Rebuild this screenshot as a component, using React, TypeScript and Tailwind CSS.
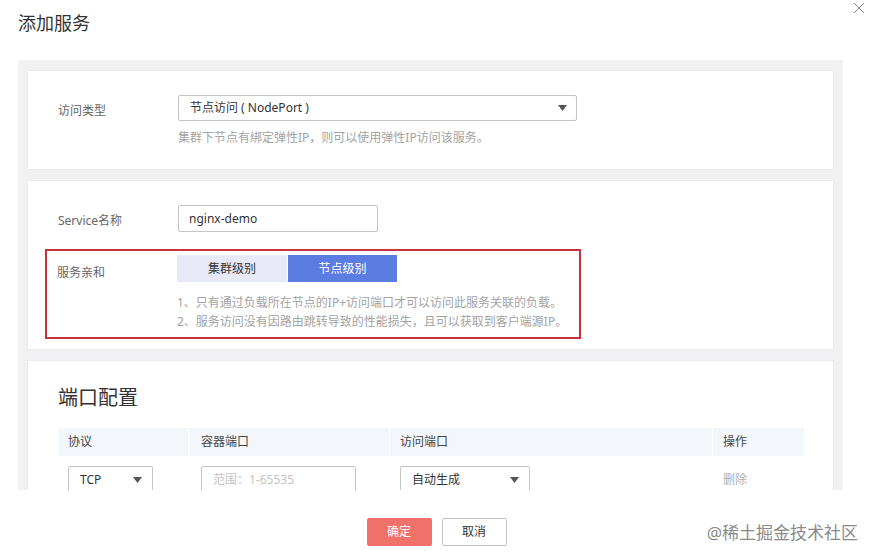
import React from "react";

const Caret = () => (
  <svg width="9" height="6" viewBox="0 0 9 6" className="shrink-0">
    <path d="M0 0 L9 0 L4.5 6 Z" fill="#555" />
  </svg>
);

export default function App() {
  const font = { fontFamily: '"Noto Sans", "Noto Sans CJK SC", sans-serif' };
  return (
    <div
      className="relative w-[873px] h-[560px] bg-white overflow-hidden text-[12px] text-[#555]"
      style={font}
    >
      <div className="h-[60px] pl-[18px] pt-[10px]">
        <h1 className="text-[18px] leading-[26px] text-[#333] font-normal">添加服务</h1>
      </div>
      <div className="absolute right-[8px] top-[0px]">
        <svg width="12" height="12" viewBox="0 0 12 12" className="mt-[2px]">
          <path d="M1 1 L11 11 M11 1 L1 11" stroke="#888" strokeWidth="1" />
        </svg>
      </div>

      <div className="ml-[18px] w-[825px] h-[430px] bg-[#f1f1f4] overflow-hidden pt-[10px] pl-[9px] pr-[9px] flex flex-col gap-[10px]">
        {/* Card 1 */}
        <div className="h-[100px] shrink-0 bg-white border border-[#ebebef] pt-[24px] pl-[30px]">
          <div className="flex">
            <div className="w-[120px] pt-[8px] leading-[16px] text-[#666]">访问类型</div>
            <div>
              <div className="w-[399px] h-[26px] border border-[#c4c4c4] rounded-[2px] flex items-center justify-between pl-[11px] pr-[9px] text-[#333]">
                <span>节点访问 ( NodePort )</span>
                <Caret />
              </div>
              <div className="mt-[9px] leading-[16px] text-[#a3a3a3]">
                集群下节点有绑定弹性IP，则可以使用弹性IP访问该服务。
              </div>
            </div>
          </div>
        </div>

        {/* Card 2 */}
        <div className="h-[170px] shrink-0 bg-white border border-[#ebebef] pt-[24px]">
          <div className="flex pl-[30px]">
            <div className="w-[120px] pt-[8px] leading-[16px] text-[#666]">Service名称</div>
            <div className="w-[200px] h-[27px] border border-[#c4c4c4] rounded-[2px] flex items-center pl-[10px] text-[#333]">
              nginx-demo
            </div>
          </div>
          <div className="ml-[17px] mt-[17px] w-[536px] h-[90px] border-2 border-[#c8323f] flex pl-[10px] pt-[4px]">
            <div className="w-[120px] pt-[10px] leading-[16px] text-[#666]">服务亲和</div>
            <div>
              <div className="flex gap-[1px]">
                <div className="w-[110px] h-[27px] bg-[#e7e9f6] flex items-center justify-center text-[#333]">
                  集群级别
                </div>
                <div className="w-[109px] h-[27px] bg-[#5b7ce0] flex items-center justify-center text-white">
                  节点级别
                </div>
              </div>
              <div className="mt-[11px] leading-[19px] text-[#a3a3a3]">
                <div>1、只有通过负载所在节点的IP+访问端口才可以访问此服务关联的负载。</div>
                <div>2、服务访问没有因路由跳转导致的性能损失，且可以获取到客户端源IP。</div>
              </div>
            </div>
          </div>
        </div>

        {/* Card 3 */}
        <div className="flex-1 shrink-0 bg-white border border-[#ebebef] pl-[30px] pt-[24px]">
          <div className="text-[20px] leading-[26px] text-[#333]">端口配置</div>
          <div className="mt-[17px] w-[746px]">
            <div className="h-[28px] bg-[#f3f6fb] flex items-center text-[#444]">
              <div className="w-[131px] pl-[10px] border-r border-white h-full flex items-center">协议</div>
              <div className="w-[201px] pl-[12px] border-r border-white h-full flex items-center">容器端口</div>
              <div className="w-[323px] pl-[10px] border-r border-white h-full flex items-center">访问端口</div>
              <div className="flex-1 pl-[10px] h-full flex items-center">操作</div>
            </div>
            <div className="flex items-center pt-[10px]">
              <div className="w-[131px] pl-[10px]">
                <div className="w-[85px] h-[28px] border border-[#c4c4c4] rounded-[2px] flex items-center justify-between pl-[11px] pr-[10px] text-[#333]">
                  <span>TCP</span>
                  <Caret />
                </div>
              </div>
              <div className="w-[201px] pl-[12px]">
                <div className="w-[155px] h-[28px] border border-[#c4c4c4] rounded-[2px] flex items-center pl-[11px] text-[#c4c4c4]">
                  范围：1-65535
                </div>
              </div>
              <div className="w-[323px] pl-[10px]">
                <div className="w-[130px] h-[28px] border border-[#c4c4c4] rounded-[2px] flex items-center justify-between pl-[11px] pr-[10px] text-[#333]">
                  <span>自动生成</span>
                  <Caret />
                </div>
              </div>
              <div className="flex-1 pl-[10px] text-[#b0b0b0]">删除</div>
            </div>
          </div>
        </div>
      </div>

      {/* Footer */}
      <div className="flex justify-center gap-[10px] mt-[28px]">
        <div className="w-[65px] h-[28px] bg-[#f0706a] rounded-[2px] flex items-center justify-center text-white">
          确定
        </div>
        <div className="w-[65px] h-[28px] border border-[#c4c4c4] rounded-[2px] flex items-center justify-center text-[#333]">
          取消
        </div>
      </div>

      <div className="absolute right-[15px] bottom-[16px] text-[17px] leading-[22px] text-[#8a8a8a]">
        @稀土掘金技术社区
      </div>
    </div>
  );
}
